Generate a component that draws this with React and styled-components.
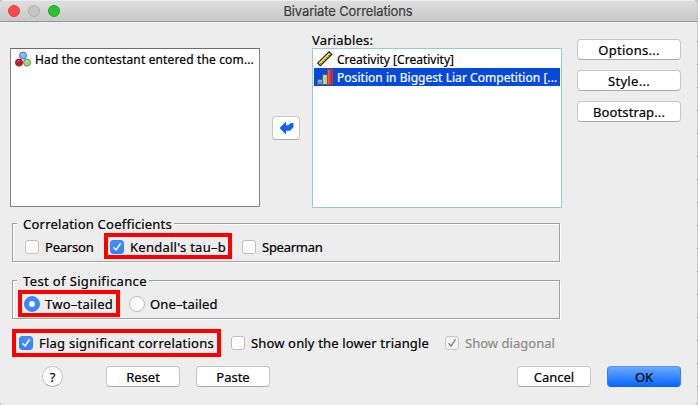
import React from 'react';
import styled, { createGlobalStyle, css } from 'styled-components';

const GlobalStyle = createGlobalStyle`
  *, *::before, *::after { box-sizing: border-box; }
  body { margin: 0; overflow: hidden; background: #c4c4c4; }
  button { font: inherit; color: inherit; padding: 0; margin: 0; }
`;

/* The desktop behind the window shows as a ruled strip on the right. */
const Desktop = styled.div`
  width: 698px;
  height: 405px;
  padding-right: 1px;
  background: repeating-linear-gradient(#c6c6c6 0 22px, #8a8a8a 22px 23px) 0 -4px;
`;

const Window = styled.main`
  display: flex;
  flex-direction: column;
  width: 697px;
  height: 405px;
  overflow: hidden;
  border-radius: 5px 5px 4px 4px;
  background: #ededed;
  color: #000;
  font: 13px/18px 'Noto Sans', sans-serif;
  -webkit-text-stroke: 0.2px currentColor;
  white-space: nowrap;
`;

const TitleBar = styled.header`
  display: grid;
  grid-template-columns: 68px 1fr 68px;
  align-items: center;
  flex: none;
  height: 22px;
  border-top: 1px solid #ececec;
  border-bottom: 1px solid #989898;
  background: linear-gradient(#dedede, #c8c8c8);
`;

const Lights = styled.div`
  display: flex;
  gap: 8px;
  padding-left: 8px;
`;

const Light = styled.span`
  width: 12px;
  height: 12px;
  border: 1px solid ${(p) => p.$edge};
  border-radius: 50%;
  background: ${(p) => p.$fill};
`;

const Title = styled.h1`
  margin: 0;
  text-align: center;
  font: 400 13px/20px Inter, sans-serif;
  letter-spacing: -0.13px;
  color: #3c3c3c;
  padding-right: 1px;
`;

const Label = styled.span`
  letter-spacing: ${(p) => p.$track || 0}px;
`;

const Top = styled.section`
  display: grid;
  grid-template-columns: 250px 52px 250px 104px;
  height: 186px;
  padding-left: 10px;
  flex: none;
`;

const Column = styled.div`
  display: flex;
  flex-direction: column;
`;

const ListCaption = styled.div`
  height: 26px;
  padding-top: 9px;
`;

const ListBox = styled.div`
  height: ${(p) => (p.$focused ? 160 : 159)}px;
  padding: 1px;
  border: 1px solid ${(p) => (p.$focused ? '#94c9e0' : '#858585')};
  border-top-color: ${(p) => (p.$focused ? '#94c9e0' : '#6c6c6c')};
  background: #fff;
`;

const ListItem = styled.div`
  display: flex;
  align-items: center;
  gap: 4px;
  height: 18px;
  padding-left: 3px;
  font-size: 12px;
  line-height: 18px;
  ${Label} { padding-top: 2px; }
  ${(p) => p.$selected && css`
    background: #0749d9;
    color: #fff;
  `}
`;

const ItemIcon = styled.svg`
  flex: none;
  width: 16px;
  height: 16px;
`;

const Mover = styled.div`
  display: flex;
  justify-content: center;
  padding-top: 94px;
`;

const Button = styled.button`
  display: flex;
  align-items: center;
  justify-content: center;
  width: ${(p) => p.$width}px;
  height: ${(p) => p.$height || 21}px;
  border: 1px solid #c6c6c6;
  border-bottom-color: #ababab;
  border-radius: ${(p) => (p.$round ? '50%' : '4px')};
  background: #fff;
  line-height: 18px;
  ${(p) => p.$primary && css`
    border-color: #5a9af6 #2f7ff8 #0a63f5;
    background: linear-gradient(#6ba9fb, #0868ff);
  `}
`;

const SideActions = styled.div`
  display: flex;
  flex-direction: column;
  gap: 10px;
  padding: 17px 0 0 15px;
`;

const Group = styled.section`
  flex: none;
  width: 548px;
  height: 39px;
  margin: ${(p) => p.$top}px 0 0 12px;
  border: 1px solid #a0a0a0;
  box-shadow: 1px 1px 0 #fff, inset 1px 1px 0 #fff;
`;

const Legend = styled.h2`
  width: fit-content;
  height: 16px;
  margin: -9px 0 0 4px;
  padding: 0 2px 0 6px;
  background: #ededed;
  font-size: 13px;
  font-weight: 400;
  line-height: 18px;
`;

const Options = styled.div`
  display: flex;
  align-items: center;
  height: ${(p) => p.$height}px;
  padding-left: ${(p) => p.$left}px;
`;

const FlagRow = styled(Options)`
  flex: none;
  margin-top: 10px;
`;

const Option = styled.label`
  position: relative;
  display: flex;
  align-items: center;
  flex: none;
  gap: ${(p) => p.$gap || 6}px;
  width: ${(p) => p.$width}px;
  color: ${(p) => (p.$disabled ? '#8a8a8a' : 'inherit')};
`;

/* Red annotation frame drawn over an option. */
const Marker = styled.i`
  position: absolute;
  left: ${(p) => p.$left}px;
  top: ${(p) => p.$top}px;
  width: ${(p) => p.$width}px;
  height: ${(p) => p.$height}px;
  border: 4px solid #fe0000;
`;

const Box = styled.span`
  display: flex;
  flex: none;
  width: 14px;
  height: 14px;
  border: 1px solid #bdbdbd;
  border-radius: 3px;
  background: #fff;
  ${(p) => p.$checked && css`
    border-color: #3a82f3;
    background: linear-gradient(#4590fa, #3482fb);
  `}
  ${(p) => p.$disabled && css`
    border-color: #c8c8c8;
    background: #f3f3f3;
  `}
`;

const Radio = styled.span`
  display: grid;
  place-items: center;
  flex: none;
  width: 16px;
  height: 16px;
  border: 1px solid ${(p) => (p.$checked ? '#3a83f4' : '#b9b9b9')};
  border-radius: 50%;
  background: ${(p) => (p.$checked ? 'radial-gradient(circle, #fff 0 2.6px, #3b88fb 3.4px)' : '#fff')};
`;

const Footer = styled.footer`
  display: flex;
  align-items: center;
  flex: none;
  margin-top: 9px;
  padding-left: 42px;
  gap: 16px;
`;

const Gap = styled.span`
  width: ${(p) => p.$width}px;
`;

const Tick = ({ color }) => (
  <svg width="12" height="12" viewBox="0 0 12 12" fill="none" stroke={color} strokeWidth="1.5" strokeLinecap="round" strokeLinejoin="round">
    <path d="M3 6.7 5.1 9 9.2 2.9" />
  </svg>
);

const NominalIcon = () => (
  <ItemIcon viewBox="0 0 16 16">
    <circle cx="8" cy="4.6" r="3.5" fill="#86b7ec" stroke="#3977c0" />
    <circle cx="4" cy="11.6" r="3.5" fill="#c51c32" stroke="#a00f24" />
    <circle cx="12" cy="11.6" r="3.5" fill="#a6d183" stroke="#5d8e3c" />
    <path d="M6.4 4a2 2 0 0 1 2-1.3M2.5 10.7a2 2 0 0 1 1.8-1.1M10.5 10.9a2 2 0 0 1 1.8-1.2" fill="none" stroke="#fff" strokeOpacity=".4" />
  </ItemIcon>
);

const ScaleIcon = () => (
  <ItemIcon viewBox="0 0 16 16">
    <path d="M.7 12.2 12.2.8l2.6 2.6L3.3 14.8z" fill="#f9c928" stroke="#151515" strokeWidth="1.1" />
    <path d="m2.5 12.2 9.7-9.6" stroke="#ffe46e" strokeWidth="1.2" />
    <path d="m4.4 13-.8-.8m2.8-1.2-.8-.8m2.8-1.2-.8-.8m2.8-1.2-.8-.8m2.8-1.2-.8-.8" stroke="#33290b" strokeWidth="1" />
  </ItemIcon>
);

const OrdinalIcon = () => (
  <ItemIcon viewBox="0 0 16 16">
    <defs>
      <linearGradient id="redBar"><stop stopColor="#f66" /><stop offset="1" stopColor="#cf0910" /></linearGradient>
      <linearGradient id="blueBar" x2="0" y2="1"><stop stopColor="#91bde9" /><stop offset="1" stopColor="#4284c5" /></linearGradient>
    </defs>
    <path d="M.5 10.5h5v5h-5z" fill="url(#blueBar)" stroke="#5c6064" />
    <path d="M5.5 5.5h5v10h-5z" fill="#b7d39a" stroke="#5c6064" />
    <path d="M10.5.5h5v15h-5z" fill="url(#redBar)" stroke="#8a4a50" />
  </ItemIcon>
);

const ArrowIcon = () => (
  <svg width="15" height="14" viewBox="0 0 15 14">
    <path d="M.5 7 7 .5v3.7h2.2L12 2h2.4v4.2L11 9.8H7v3.7z" fill="#0f62fe" />
  </svg>
);

const Check = ({ label, track, checked, disabled, width, marker }) => (
  <Option $width={width} $disabled={disabled}>
    <Box $checked={checked && !disabled} $disabled={disabled}>
      {checked && <Tick color={disabled ? '#8b8b8b' : '#fff'} />}
    </Box>
    <Label $track={track}>{label}</Label>
    {marker}
  </Option>
);

export default function App() {
  return (
    <Desktop>
      <GlobalStyle />
      <Window>
        <TitleBar>
          <Lights>
            <Light $fill="#fc4948" $edge="#e33e3c" />
            <Light $fill="#c5c5c5" $edge="#adadad" />
            <Light $fill="#28c231" $edge="#1dab25" />
          </Lights>
          <Title>Bivariate Correlations</Title>
        </TitleBar>

        <Top>
          <Column>
            <ListCaption />
            <ListBox>
              <ListItem>
                <NominalIcon />
                <Label $track={0.14}>Had the contestant entered the com...</Label>
              </ListItem>
            </ListBox>
          </Column>
          <Mover>
            <Button $width={28} $height={24} aria-label="Move"><ArrowIcon /></Button>
          </Mover>
          <Column>
            <ListCaption><Label $track={0.18}>Variables:</Label></ListCaption>
            <ListBox $focused>
              <ListItem>
                <ScaleIcon />
                <Label $track={0.01}>Creativity [Creativity]</Label>
              </ListItem>
              <ListItem $selected>
                <OrdinalIcon />
                <Label $track={0.04}>Position in Biggest Liar Competition [...</Label>
              </ListItem>
            </ListBox>
          </Column>
          <SideActions>
            <Button $width={104}><Label $track={0.27}>Options...</Label></Button>
            <Button $width={104}><Label $track={0.3}>Style...</Label></Button>
            <Button $width={104}><Label $track={0.11}>Bootstrap...</Label></Button>
          </SideActions>
        </Top>

        <Group $top={15}>
          <Legend><Label $track={0.23}>Correlation Coefficients</Label></Legend>
          <Options $height={32} $left={12}>
            <Check width={85} label="Pearson" track={-0.21} />
            <Check width={132} label="Kendall's tau–b" track={0.26} checked
              marker={<Marker $left={-6} $top={-5} $width={128} $height={26} />} />
            <Check label="Spearman" track={-0.26} />
          </Options>
        </Group>

        <Group $top={18}>
          <Legend><Label $track={0.37}>Test of Significance</Label></Legend>
          <Options $height={32} $left={11}>
            <Option $width={105} $gap={5}>
              <Radio $checked /><Label $track={0.24}>Two–tailed</Label>
              <Marker $left={-6} $top={-5} $width={102} $height={27} />
            </Option>
            <Option $gap={5}>
              <Radio /><Label $track={0.15}>One–tailed</Label>
            </Option>
          </Options>
        </Group>

        <FlagRow $height={28} $left={19}>
          <Check width={212} label="Flag significant correlations" track={0.24} checked
            marker={<Marker $left={-7} $top={-5} $width={209} $height={28} />} />
          <Check width={214} label="Show only the lower triangle" track={0.15} />
          <Check label="Show diagonal" track={0.03} checked disabled />
        </FlagRow>

        <Footer>
          <Button $width={21} $round>?</Button>
          <Gap $width={11} />
          <Button $width={74}>Reset</Button>
          <Button $width={74}>Paste</Button>
          <Gap $width={215} />
          <Button $width={74}>Cancel</Button>
          <Button $width={74} $primary>OK</Button>
        </Footer>
      </Window>
    </Desktop>
  );
}
